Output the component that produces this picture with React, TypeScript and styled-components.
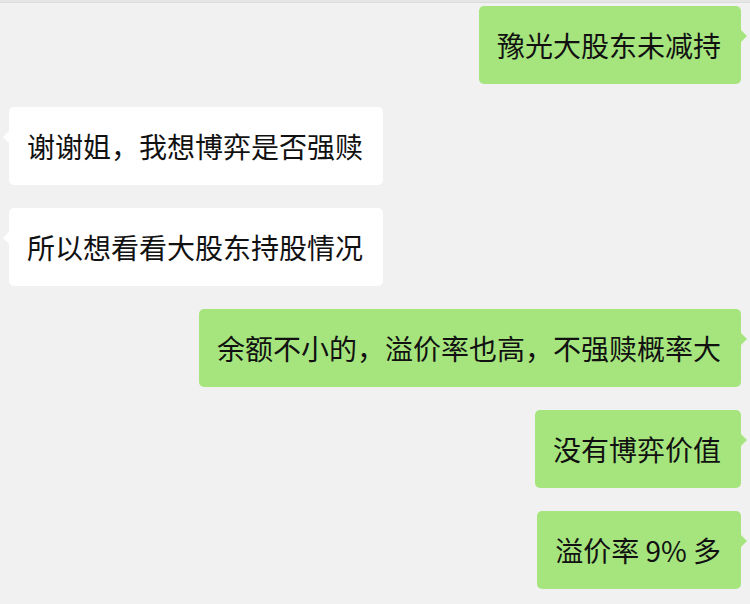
import React from 'react';
import styled, { createGlobalStyle, css } from 'styled-components';

const GlobalStyle = createGlobalStyle`
  html, body {
    margin: 0;
    padding: 0;
    background: #f1f1f1;
  }
  body {
    font-family: "Noto Sans CJK SC", "Noto Sans", sans-serif;
  }
`;

const Page = styled.div`
  width: 750px;
  height: 604px;
  overflow: hidden;
  background: #f1f1f1;
  border-top: 2px solid #e6e6e6;
  box-sizing: border-box;
`;

const TopLine = styled.div`
  height: 1px;
  background: #dcdcdc;
`;

const ChatList = styled.div`
  display: flex;
  flex-direction: column;
  gap: 23px;
  padding: 3px 9px 0 9px;
`;

const Row = styled.div<{ mine?: boolean }>`
  display: flex;
  justify-content: ${({ mine }) => (mine ? 'flex-end' : 'flex-start')};
`;

const Bubble = styled.div<{ mine?: boolean }>`
  position: relative;
  display: flex;
  align-items: center;
  height: 78px;
  box-sizing: border-box;
  padding: 0 20px 0 18px;
  border-radius: 5px;
  font-size: 28px;
  line-height: 1;
  color: #111111;
  white-space: nowrap;
  background: ${({ mine }) => (mine ? '#a6e57e' : '#ffffff')};

  &::after {
    content: '';
    position: absolute;
    top: 24px;
    width: 0;
    height: 0;
    border-top: 6px solid transparent;
    border-bottom: 6px solid transparent;
    ${({ mine }) =>
      mine
        ? css`
            right: -6px;
            border-left: 6px solid #a6e57e;
          `
        : css`
            left: -6px;
            border-right: 6px solid #ffffff;
          `}
  }
`;

const messages: { text: string; mine: boolean }[] = [
  { text: '豫光大股东未减持', mine: true },
  { text: '谢谢姐，我想博弈是否强赎', mine: false },
  { text: '所以想看看大股东持股情况', mine: false },
  { text: '余额不小的，溢价率也高，不强赎概率大', mine: true },
  { text: '没有博弈价值', mine: true },
  { text: '溢价率 9% 多', mine: true },
];

const App = () => {
  return (
    <Page>
      <GlobalStyle />
      <TopLine />
      <ChatList>
        {messages.map((m, i) => (
          <Row key={i} mine={m.mine}>
            <Bubble mine={m.mine}>{m.text}</Bubble>
          </Row>
        ))}
      </ChatList>
    </Page>
  );
};

export default App;
